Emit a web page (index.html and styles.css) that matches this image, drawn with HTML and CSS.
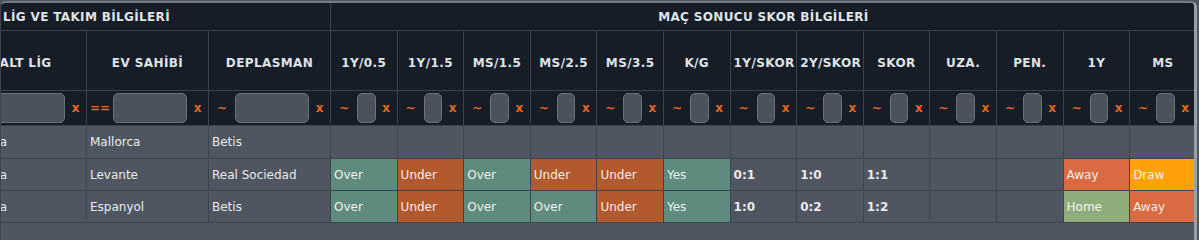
FILE: index.html
```html
<!DOCTYPE html>
<html lang="tr">
<head>
<meta charset="utf-8">
<title>Maç Sonucu Skor Bilgileri</title>
<link rel="stylesheet" href="styles.css">
</head>
<body>
<div class="wrap">
  <div class="grid">
    <div class="gh gh-left">LİG VE TAKIM BİLGİLERİ</div>
    <div class="gh gh-right">MAÇ SONUCU SKOR BİLGİLERİ</div>

    <div class="ch">LİG</div>
    <div class="ch">ALT LİG</div>
    <div class="ch">EV SAHİBİ</div>
    <div class="ch">DEPLASMAN</div>
    <div class="ch">1Y/0.5</div>
    <div class="ch">1Y/1.5</div>
    <div class="ch">MS/1.5</div>
    <div class="ch">MS/2.5</div>
    <div class="ch">MS/3.5</div>
    <div class="ch">K/G</div>
    <div class="ch">1Y/SKOR</div>
    <div class="ch">2Y/SKOR</div>
    <div class="ch">SKOR</div>
    <div class="ch">UZA.</div>
    <div class="ch">PEN.</div>
    <div class="ch">1Y</div>
    <div class="ch">MS</div>

    <div class="fc"><span class="op">~</span><input class="fi" type="text"><span class="clr">x</span></div>
    <div class="fc"><span class="op">~</span><input class="fi" type="text"><span class="clr">x</span></div>
    <div class="fc"><span class="op">==</span><input class="fi" type="text"><span class="clr">x</span></div>
    <div class="fc"><span class="op">~</span><input class="fi" type="text"><span class="clr">x</span></div>
    <div class="fc"><span class="op">~</span><input class="fi" type="text"><span class="clr">x</span></div>
    <div class="fc"><span class="op">~</span><input class="fi" type="text"><span class="clr">x</span></div>
    <div class="fc"><span class="op">~</span><input class="fi" type="text"><span class="clr">x</span></div>
    <div class="fc"><span class="op">~</span><input class="fi" type="text"><span class="clr">x</span></div>
    <div class="fc"><span class="op">~</span><input class="fi" type="text"><span class="clr">x</span></div>
    <div class="fc"><span class="op">~</span><input class="fi" type="text"><span class="clr">x</span></div>
    <div class="fc"><span class="op">~</span><input class="fi" type="text"><span class="clr">x</span></div>
    <div class="fc"><span class="op">~</span><input class="fi" type="text"><span class="clr">x</span></div>
    <div class="fc"><span class="op">~</span><input class="fi" type="text"><span class="clr">x</span></div>
    <div class="fc"><span class="op">~</span><input class="fi" type="text"><span class="clr">x</span></div>
    <div class="fc"><span class="op">~</span><input class="fi" type="text"><span class="clr">x</span></div>
    <div class="fc"><span class="op">~</span><input class="fi" type="text"><span class="clr">x</span></div>
    <div class="fc"><span class="op">~</span><input class="fi" type="text"><span class="clr">x</span></div>

    <div class="dc">İspanya</div>
    <div class="dc">LaLiga</div>
    <div class="dc">Mallorca</div>
    <div class="dc">Betis</div>
    <div class="dc"></div>
    <div class="dc"></div>
    <div class="dc"></div>
    <div class="dc"></div>
    <div class="dc"></div>
    <div class="dc"></div>
    <div class="dc"></div>
    <div class="dc"></div>
    <div class="dc"></div>
    <div class="dc"></div>
    <div class="dc"></div>
    <div class="dc"></div>
    <div class="dc"></div>

    <div class="dc">İspanya</div>
    <div class="dc">LaLiga</div>
    <div class="dc">Levante</div>
    <div class="dc">Real Sociedad</div>
    <div class="dc over">Over</div>
    <div class="dc under">Under</div>
    <div class="dc over">Over</div>
    <div class="dc under">Under</div>
    <div class="dc under">Under</div>
    <div class="dc over">Yes</div>
    <div class="dc score">0:1</div>
    <div class="dc score">1:0</div>
    <div class="dc score">1:1</div>
    <div class="dc"></div>
    <div class="dc"></div>
    <div class="dc away">Away</div>
    <div class="dc draw">Draw</div>

    <div class="dc">İspanya</div>
    <div class="dc">LaLiga</div>
    <div class="dc">Espanyol</div>
    <div class="dc">Betis</div>
    <div class="dc over">Over</div>
    <div class="dc under">Under</div>
    <div class="dc over">Over</div>
    <div class="dc over">Over</div>
    <div class="dc under">Under</div>
    <div class="dc over">Yes</div>
    <div class="dc score">1:0</div>
    <div class="dc score">0:2</div>
    <div class="dc score">1:2</div>
    <div class="dc"></div>
    <div class="dc"></div>
    <div class="dc home">Home</div>
    <div class="dc away">Away</div>
  </div>
</div>
</body>
</html>
```

FILE: styles.css
```css
html, body {
  margin: 0;
  padding: 0;
  background: #4f5661;
}

body {
  font-family: "DejaVu Sans", Verdana, sans-serif;
  font-size: 12px;
  color: #e6e8eb;
  overflow: hidden;
}

.wrap {
  box-sizing: border-box;
  width: 1197px;
  height: 240px;
  margin-top: 1px;
  border-top: 2px solid #747b84;
  border-left: 1px solid #3c434c;
  border-right: 3px solid #9ca1a8;
  border-radius: 6px 6px 0 0;
  overflow: hidden;
  background: #4f5661;
}

.grid {
  display: grid;
  grid-template-columns: repeat(4, 122px) repeat(13, 66.6px);
  grid-template-rows: 28px 60px 35px 33px 32px 32px;
  margin-left: -158px;
  width: max-content;
}

.gh, .ch, .fc {
  box-sizing: border-box;
  background: #161d27;
  border-right: 1px solid #3b424c;
  border-bottom: 1px solid #3b424c;
  color: #dfe3e8;
  font-weight: bold;
}

.gh {
  display: flex;
  align-items: center;
  justify-content: center;
  font-size: 12px;
  letter-spacing: 0.35px;
  white-space: nowrap;
  overflow: hidden;
}

.gh-left {
  grid-column: 1 / span 4;
}

.gh-right {
  grid-column: 5 / span 13;
}

.ch {
  padding: 5px 3px 0;
  text-align: center;
  line-height: 54px;
  letter-spacing: 0.4px;
  white-space: nowrap;
  overflow: hidden;
}

.fc {
  display: grid;
  grid-template-columns: 26px 1fr 21px;
  align-items: center;
  color: #e5671e;
}

.op {
  text-align: center;
  font-size: 12px;
  font-weight: bold;
}

.clr {
  text-align: center;
  font-size: 12px;
  font-weight: bold;
}

.fi {
  box-sizing: border-box;
  width: 100%;
  min-width: 0;
  height: 30px;
  margin: 0;
  padding: 0;
  border: 1px solid #6a717a;
  border-radius: 5px;
  background: #4b525c;
}

.dc {
  box-sizing: border-box;
  background: #4f5661;
  border-right: 1px solid #3e444d;
  border-bottom: 1px solid #3e444d;
  padding: 0 3px;
  display: flex;
  align-items: center;
  white-space: nowrap;
  overflow: hidden;
  color: #e8eaec;
}

.score {
  font-weight: bold;
}

.over {
  background: #5f8a7e;
  color: #eef2ef;
}

.under {
  background: #b25a2e;
  color: #f6ece4;
}

.away {
  background: #da6a41;
  color: #f7ece6;
}

.draw {
  background: #fea10b;
  color: #fdf1de;
}

.home {
  background: #8fad7b;
  color: #f1f5ee;
}
```
